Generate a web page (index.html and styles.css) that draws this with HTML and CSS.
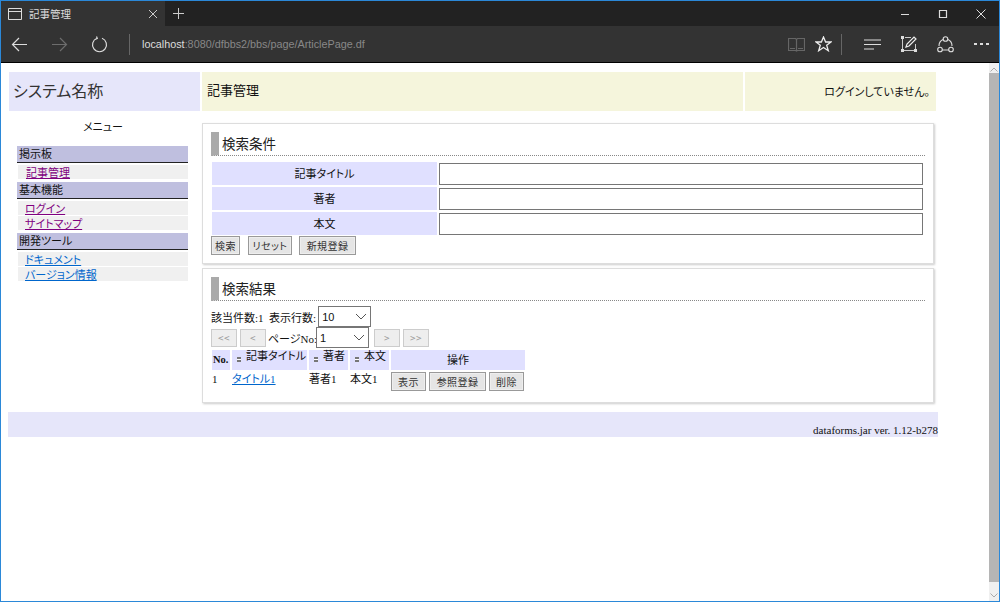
FILE: index.html
```html
<!DOCTYPE html>
<html lang="ja">
<head>
<meta charset="utf-8">
<title>記事管理</title>
<link rel="stylesheet" href="styles.css">
</head>
<body>
<div class="window">
  <div class="tabbar">
    <div class="tab">
      <svg class="tabicon" width="14" height="12" viewBox="0 0 14 12"><path d="M.5.5h13v11H.5zM.5 3.5h13" fill="none" stroke="#ddd"/></svg>
      <span class="tabtitle">記事管理</span>
      <svg class="tabclose" width="10" height="10" viewBox="0 0 10 10"><path d="M1 1l8 8M9 1l-8 8" stroke="#ccc" stroke-width="1"/></svg>
    </div>
    <svg class="newtab" width="11" height="11" viewBox="0 0 11 11"><path d="M5.500 0v11M0 5.500h11" stroke="#ccc"/></svg>
    <div class="winctl">
      <svg width="10" height="10" viewBox="0 0 10 10"><path d="M1 5.500h8" stroke="#ddd"/></svg>
      <svg width="10" height="10" viewBox="0 0 10 10"><path d="M1.500 1.500h7v7h-7z" fill="none" stroke="#ddd" stroke-width="1.200"/></svg>
      <svg width="10" height="10" viewBox="0 0 10 10"><path d="M.5.5l9 9M9.500.5l-9 9" stroke="#ddd"/></svg>
    </div>
  </div>
  <div class="toolbar">
    <div class="navbtns">
      <svg width="17" height="15" viewBox="0 0 17 15"><path d="M16 7.500H1.500M8 1L1.500 7.500 8 14" fill="none" stroke="#ddd" stroke-width="1.200"/></svg>
      <svg width="17" height="15" viewBox="0 0 17 15"><path d="M1 7.500h14.500M9 1l6.500 6.500L9 14" fill="none" stroke="#6d6d6d" stroke-width="1.200"/></svg>
      <svg width="17" height="17" viewBox="0 0 17 17"><path d="M6 2.200A7 7 0 1 0 11 2.200M5.500 .5L6.300 2.500 4 3.500" fill="none" stroke="#ddd" stroke-width="1.200"/></svg>
    </div>
    <div class="vsep"></div>
    <div class="url"><span class="host">localhost</span>:8080/dfbbs2/bbs/page/ArticlePage.df</div>
    <div class="tools">
      <svg class="t-book" width="17" height="15" viewBox="0 0 17 15"><path d="M.5 1.500h7l1 1 1-1h7v12h-7l-1 .5-1-.5h-7zM8.500 2.500v11M2 11.500h5M10 11.500h5" fill="none" stroke="#666" stroke-width="1.200"/></svg>
      <svg class="t-star" width="17" height="16" viewBox="0 0 17 16"><path d="M8.500 1l2.100 5h5.400l-4.300 3.300 1.600 5.400-4.800-3.200-4.800 3.200 1.600-5.400L1 6h5.400z" fill="none" stroke="#eee" stroke-width="1.300"/></svg>
      <div class="vsep2"></div>
      <svg class="t-hub" width="17" height="11" viewBox="0 0 17 11"><path d="M0 1h17M0 5.500h17M0 10h10" stroke="#ddd" stroke-width="1.200"/></svg>
      <svg class="t-note" width="16" height="16" viewBox="0 0 16 16"><path d="M1.500 3v10M14.500 8v5M4 1.500h6M3 14.500h10" stroke="#ccc" fill="none"/><path d="M0 0h3v3H0zM0 13h3v3H0zM13 13h3v3h-3z" fill="#ddd"/><path d="M5 11l1-3 7-7 2 2-7 7z" fill="none" stroke="#eee" stroke-width="1.200"/></svg>
      <svg class="t-share" width="17" height="17" viewBox="0 0 17 17"><path d="M6 3.500A7 7 0 0 0 2 10M11 3.500A7 7 0 0 1 15 10M5 14h7" fill="none" stroke="#ddd" stroke-width="1.100"/><circle cx="8.500" cy="3" r="2.300" fill="none" stroke="#ddd" stroke-width="1.100"/><circle cx="3" cy="13.500" r="2.300" fill="none" stroke="#ddd" stroke-width="1.100"/><circle cx="14" cy="13.500" r="2.300" fill="none" stroke="#ddd" stroke-width="1.100"/></svg>
      <div class="dots"><i></i><i></i><i></i></div>
    </div>
  </div>
  <div class="viewport">
    <div class="page">
      <div class="header">
        <div class="sysname">システム名称</div>
        <div class="pagename">記事管理</div>
        <div class="login">ログインしていません。</div>
      </div>
      <div class="columns">
        <nav class="side">
          <div class="menutitle">メニュー</div>
          <div class="group">掲示板</div>
          <ul class="items"><li class="indent"><a class="seen" href="#a">記事管理</a></li></ul>
          <div class="group">基本機能</div>
          <ul class="items"><li><a class="seen" href="#b">ログイン</a></li><li><a class="seen" href="#c">サイトマップ</a></li></ul>
          <div class="group">開発ツール</div>
          <ul class="items"><li><a href="#d">ドキュメント</a></li><li><a href="#e">バージョン情報</a></li></ul>
        </nav>
        <main class="main">
          <section class="panel panel-search">
            <h2 class="heading">検索条件</h2>
            <div class="searchform">
              <div class="flabel">記事タイトル</div><input class="finput" type="text">
              <div class="flabel">著者</div><input class="finput" type="text">
              <div class="flabel">本文</div><input class="finput" type="text">
            </div>
            <div class="btnrow">
              <span class="btn w29">検索</span><span class="btn w44">リセット</span><span class="btn w57 btn-gap">新規登録</span>
            </div>
          </section>
          <section class="panel panel-result">
            <h2 class="heading">検索結果</h2>
            <div class="countrow">該当件数:1&nbsp;&nbsp;表示行数:<span class="select sel-a">10<svg width="12" height="7" viewBox="0 0 12 7"><path d="M1 1l5 5 5-5" fill="none" stroke="#555"/></svg></span></div>
            <div class="pagerow">
              <span class="btn dis wide">&lt;&lt;</span><span class="btn dis wide">&lt;</span><span class="pagelabel">ページNo:</span><span class="select sel-b">1<svg width="12" height="7" viewBox="0 0 12 7"><path d="M1 1l5 5 5-5" fill="none" stroke="#555"/></svg></span><span class="btn dis wide gap">&gt;</span><span class="btn dis wide">&gt;&gt;</span>
            </div>
            <div class="results">
              <div class="th c1">No.</div>
              <div class="th c2 sort"><span class="arrow"></span>記事タイトル</div>
              <div class="th c3 sort"><span class="arrow"></span>著者</div>
              <div class="th c4 sort"><span class="arrow"></span>本文</div>
              <div class="th c5 center">操作</div>
              <div class="td">1</div>
              <div class="td"><a href="#t">タイトル1</a></div>
              <div class="td">著者1</div>
              <div class="td">本文1</div>
              <div class="td ops"><span class="btn w35">表示</span><span class="btn w57">参照登録</span><span class="btn w35">削除</span></div>
            </div>
          </section>
        </main>
      </div>
      <footer class="footer">dataforms.jar ver. 1.12-b278</footer>
    </div>
    <div class="scrollbar">
      <svg width="8" height="5" viewBox="0 0 8 5"><path d="M.5 4.500L4 1l3.500 3.500" fill="none" stroke="#aaa"/></svg>
      <div class="thumb"></div>
      <svg width="8" height="5" viewBox="0 0 8 5"><path d="M.5.500L4 4l3.500-3.500" fill="none" stroke="#aaa"/></svg>
    </div>
  </div>
</div>
</body>
</html>
```

FILE: styles.css
```css
* { box-sizing: border-box; }
html, body { margin: 0; height: 100%; }
body { overflow: hidden; background: #fff; font-family: "Liberation Serif", "Noto Sans CJK JP", serif; font-size: 11px; color: #111; font-feature-settings: "palt"; }
.window { width: 1000px; height: 602px; border: 1px solid #2b88d8; display: flex; flex-direction: column; }
.tabbar { height: 25px; background: #222; display: flex; align-items: center; flex: none; }
.tab { width: 164px; height: 25px; background: #333; display: flex; align-items: center; padding-left: 7px; color: #ddd; font-family: "Noto Sans CJK JP", sans-serif; font-size: 10.500px; }
.tabicon { flex: none; }
.tabtitle { margin-left: 7px; flex: 1; }
.tabclose { margin-right: 7px; }
.newtab { margin-left: 8px; }
.winctl { margin-left: auto; display: flex; gap: 28px; padding-right: 13px; }
.toolbar { height: 37px; background: #333; border-bottom: 1px solid #000; display: flex; align-items: center; flex: none; }
.navbtns { display: flex; align-items: center; gap: 23px; padding-left: 10px; width: 128px; }
.vsep { width: 1px; height: 21px; background: #666; }
.url { margin-left: 12px; font-family: "Liberation Sans", sans-serif; font-size: 10.800px; color: #888; }
.host { color: #ddd; }
.tools { margin-left: auto; display: flex; align-items: center; padding-right: 10px; }
.t-star { margin-left: 10px; }
.vsep2 { width: 1px; height: 21px; background: #666; margin: 0 22px 0 9px; }
.t-note { margin-left: 20px; }
.t-share { margin-left: 20px; }
.dots { display: flex; gap: 3px; margin-left: 20px; }
.dots i { width: 3px; height: 2px; background: #ddd; }
.viewport { flex: 1; display: flex; min-height: 0; }
.page { width: 988px; padding: 9px 0 0 7px; }
.header { display: flex; height: 39px; width: 927px; margin-left: 1px; gap: 2px; }
.sysname { width: 191px; background: #e6e6fa; font-size: 16px; font-family: "Noto Sans CJK JP", sans-serif; display: flex; align-items: center; padding: 0 0 3px 4px; color: #333; }
.pagename { width: 541px; background: #f5f5dc; font-size: 13px; font-family: "Noto Sans CJK JP", sans-serif; display: flex; align-items: center; padding: 0 0 5px 5px; }
.login { width: 191px; background: #f5f5dc; display: flex; align-items: center; justify-content: flex-end; padding: 0 6px 1px 0; font-family: "Noto Sans CJK JP", sans-serif; font-size: 11px; }
.columns { display: flex; height: 301px; }
.side { width: 194px; padding: 7px 0 0 9px; flex: none; font-family: "Noto Sans CJK JP", sans-serif; }
.menutitle { width: 172px; text-align: center; height: 28px; line-height: 16px; }
.group { width: 171px; height: 17px; background: #bfbfdf; border-bottom: 1px solid #222; padding-left: 2px; line-height: 15px; }
.items { list-style: none; margin: 0; padding: 2px 0 2px 1px; }
.items li { width: 170px; height: 14px; background: #f0f0f0; padding-left: 7px; line-height: 14px; margin-bottom: 1px; }
.items li.indent { padding-left: 8px; }
.items a { color: #0066cc; }
.items a.seen { color: #800080; }
.main { width: 733px; padding-top: 12px; display: flex; flex-direction: column; gap: 4px; }
.panel { width: 732px; background: #fff; border: 1px solid #ddd; box-shadow: 1px 1px 2px #ccc; padding: 8px 8px 0; }
.panel-search { height: 141px; }
.panel-result { height: 135px; }
.heading { margin: 0; height: 24px; border-left: 8px solid #aaa; border-bottom: 1px dotted #888; padding-left: 3px; font: 400 13.500px/22px "Noto Sans CJK JP", sans-serif; color: #222; }
.searchform { display: grid; grid-template-columns: 225px 484px; column-gap: 2px; row-gap: 2px; margin: 6px 0 0 1px; font-family: "Noto Sans CJK JP", sans-serif; align-items: center; }
.flabel { height: 23px; background: #e0e0ff; text-align: center; line-height: 23px; }
.finput { height: 22px; border: 1px solid #767676; background: #fff; padding: 0; margin: 0; width: 484px; }
.btnrow { display: flex; margin-top: 1px; gap: 3px; }
.btn { display: inline-flex; align-items: center; justify-content: center; height: 19px; padding: 0; background: #e5e5e5; border: 1px solid #999; box-shadow: inset 0 0 0 1px #eee; font-family: "Noto Sans CJK JP", sans-serif; font-size: 10px; color: #333; letter-spacing: .4px; flex: none; }
.w29 { width: 29px; }
.w35 { width: 35px; }
.w44 { width: 44px; margin-left: 5px; }
.w57 { width: 57px; }
.btn-gap { margin-left: 4px; }
.countrow { display: flex; align-items: center; height: 21px; margin-top: 5px; }
.select { display: inline-flex; align-items: center; justify-content: space-between; height: 21px; border: 1px solid #767676; background: #fff; padding: 0 3px; font-family: "Liberation Sans", sans-serif; font-size: 11px; flex: none; }
.sel-a { width: 53px; margin-left: 2px; }
.sel-b { width: 53px; }
.pagerow { display: flex; align-items: center; height: 21px; }
.btn.dis { color: #999; border-color: #ccc; background: #eee; box-shadow: none; height: 18px; }
.wide { width: 26px; margin-right: 3px; }
.gap { margin-left: 5px; }
.pagelabel { margin: 0; width: 48px; margin-left: -1px; white-space: nowrap; flex: none; }
.results { display: grid; grid-template-columns: 18px 75px 39px 39px 134px; column-gap: 2px; margin: 2px 0 0 1px; width: 320px; }
.th { height: 20px; background: #e0e0ff; line-height: 12px; white-space: nowrap; }
.th.c1 { font-weight: 700; font-size: 10.500px; padding: 3px 0 0 1px; line-height: 14px; }
.sort { padding-left: 5px; display: flex; gap: 5px; }
.arrow { width: 4px; height: 5px; margin-top: 7px; background: linear-gradient(#777 40%, #fff 40%, #fff 60%, #777 60%); flex: none; }
.center { text-align: center; line-height: 20px; }
.td { padding-top: 2px; line-height: 14px; }
.td a { color: #0066cc; }
.ops { display: flex; gap: 3px; padding-top: 2px; }
.footer { width: 930px; height: 25px; margin-top: 0; background: #e6e6fa; display: flex; align-items: flex-end; justify-content: flex-end; line-height: 14px; padding-bottom: 0; }
.scrollbar { width: 10px; margin-left: auto; background: #f0f0f0; display: flex; flex-direction: column; align-items: center; padding: 4px 0 3px; }
.thumb { width: 10px; flex: 1; margin: 1px 0 11px; background: #b5b5b5; }
```
